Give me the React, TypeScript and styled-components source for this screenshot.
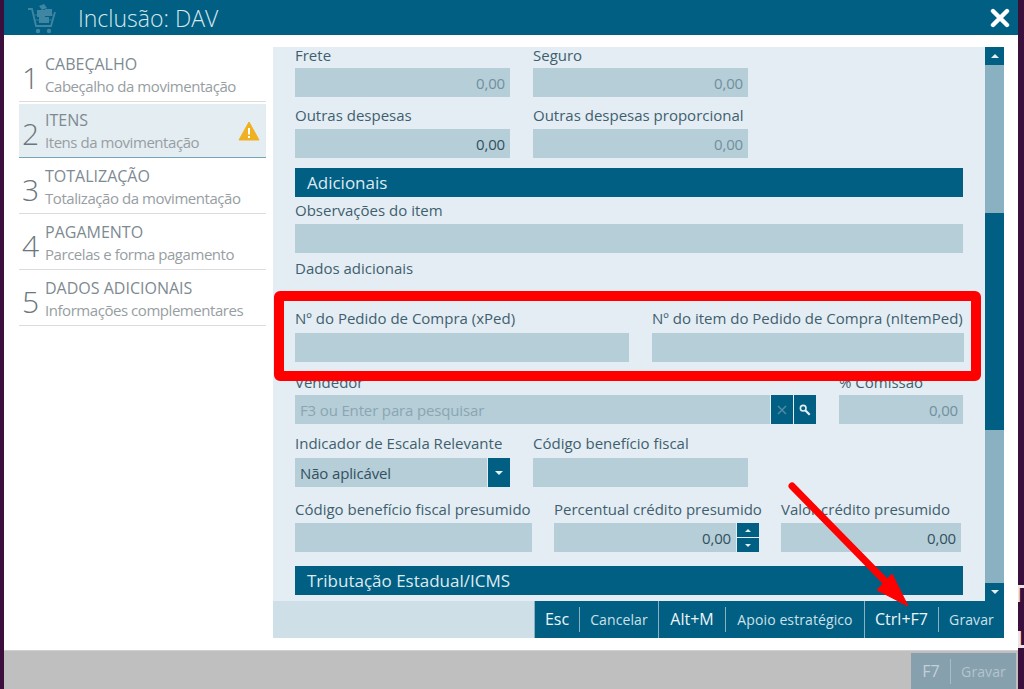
import React from 'react';
import styled, { createGlobalStyle } from 'styled-components';

const GlobalStyle = createGlobalStyle`
  html, body {
    margin: 0;
    height: 100%;
    overflow: hidden;
    background: #3a0f3c;
  }
  * { box-sizing: border-box; }
  body {
    font-family: "Open Sans", "Noto Sans", "Liberation Sans", sans-serif;
  }
`;

const Desktop = styled.div`
  position: relative;
  width: 1024px;
  height: 689px;
  padding: 0 6px 0 4px;
  overflow: hidden;
`;

// bits of the desktop's own text peeking out beside the window
const BackdropGlyph = styled.span<{ $top: number; $left: number }>`
  position: absolute;
  left: ${(p) => p.$left}px;
  top: ${(p) => p.$top}px;
  font-size: 24px;
  font-weight: 700;
  line-height: 24px;
  color: #e8e4e8;
`;

const Modal = styled.div`
  position: relative;
  height: 100%;
  display: flex;
  flex-direction: column;
  background: #fff;
`;

const TitleBar = styled.header`
  height: 35px;
  flex: none;
  display: flex;
  align-items: center;
  padding: 0 8px 0 23px;
  background: #005f83;
  color: #d7e6ec;
`;

const Title = styled.h1`
  margin: 0 0 0 21px;
  font-size: 23px;
  font-weight: 300;
  flex: 1;
`;

const Main = styled.main`
  flex: 1;
  min-height: 0;
  display: flex;
  padding: 12px 14px 12px 15px;
  gap: 7px;
`;

const Steps = styled.nav`
  width: 247px;
  flex: none;
  margin-top: -1px;
  display: flex;
  flex-direction: column;
`;

const Step = styled.div<{ $active?: boolean }>`
  height: 56px;
  padding: 3px 0 0 3px;
  display: flex;
  align-items: center;
  background: ${(p) => (p.$active ? '#e4edf2' : 'transparent')};
  border-bottom: 1px solid ${(p) => (p.$active ? '#75a5b9' : '#dcdcdc')};
  box-shadow: ${(p) => (p.$active ? 'inset 0 2px 0 #fff' : 'none')};
`;

const StepNumber = styled.span`
  width: 23px;
  font-size: 30px;
  font-weight: 300;
  color: #6c777d;
  line-height: 1;
  margin-top: 5px;
`;

const StepText = styled.div`
  flex: 1;
  min-width: 0;
  white-space: nowrap;
`;

const StepTitle = styled.div`
  font-size: 16px;
  line-height: 21px;
  color: #7e8a91;
`;

const StepSub = styled.div`
  font-size: 15px;
  line-height: 22px;
  color: #979ea2;
  letter-spacing: -0.45px;
`;

const WarnIcon = styled.svg`
  width: 22px;
  height: 20px;
  margin: 0 6px 0 0;
  flex: none;
`;

const Panel = styled.section`
  flex: 1;
  min-width: 0;
  display: flex;
  flex-direction: column;
  background: #e4edf3;
`;

const ScrollWrap = styled.div`
  flex: 1;
  min-height: 0;
  display: flex;
  overflow: hidden;
`;

const Form = styled.div`
  flex: 1;
  min-width: 0;
  padding: 0 22px;
  overflow: hidden;
`;

const Row = styled.div<{ $mb?: number; $gap?: number }>`
  display: flex;
  gap: ${(p) => p.$gap ?? 23}px;
  margin-bottom: ${(p) => p.$mb ?? 10}px;
`;

const Field = styled.div<{ $w?: number }>`
  width: ${(p) => (p.$w ? `${p.$w}px` : '100%')};
  flex: none;
`;

const Label = styled.div<{ $h?: number }>`
  height: ${(p) => p.$h ?? 22}px;
  font-size: 15px;
  line-height: 17px;
  color: #3f5f6f;
  white-space: nowrap;
`;

const NoteLabel = styled(Label)`
  height: 21px;
  margin: 7px 0 29px;
`;

const Input = styled.div<{ $dark?: boolean; $hint?: boolean; $left?: boolean }>`
  height: 29px;
  display: flex;
  align-items: center;
  justify-content: ${(p) => (p.$left ? 'flex-start' : 'flex-end')};
  padding: 0 5px;
  background: #b5ced8;
  font-size: 15px;
  letter-spacing: -0.15px;
  color: ${(p) => (p.$dark ? '#33505f' : p.$hint ? '#8ba5b1' : '#71909e')};
  white-space: nowrap;
`;

const SquareButton = styled.div<{ $muted?: boolean }>`
  width: 22px;
  height: 29px;
  flex: none;
  display: flex;
  align-items: center;
  justify-content: center;
  background: #005f83;
  color: ${(p) => (p.$muted ? '#4f8ba5' : '#e6eff3')};
`;

const InputGroup = styled.div`
  display: flex;
  gap: 1px;
`;

const Grow = styled.div`
  flex: 1;
  min-width: 0;
`;

const SpinColumn = styled.div`
  width: 22px;
  height: 29px;
  flex: none;
  display: flex;
  flex-direction: column;
  gap: 1px;
`;

const SpinButton = styled.div`
  flex: 1;
  background: #005f83;
  display: flex;
  align-items: center;
  justify-content: center;
`;

const Caret = styled.span<{ $up?: boolean; $size?: number }>`
  width: 0;
  height: 0;
  border-left: ${(p) => p.$size ?? 4}px solid transparent;
  border-right: ${(p) => p.$size ?? 4}px solid transparent;
  ${(p) =>
    p.$up
      ? `border-bottom: ${p.$size ?? 4}px solid #e6eff3;`
      : `border-top: ${p.$size ?? 4}px solid #e6eff3;`}
`;

const SectionHead = styled.h2`
  height: 29px;
  margin: 0 0 5px;
  padding: 0 12px;
  background: #005f83;
  color: #dfeaef;
  font-size: 17px;
  font-weight: 400;
  line-height: 30px;
`;

const ScrollBar = styled.div`
  width: 19px;
  flex: none;
  display: flex;
  flex-direction: column;
  background: #8ab1c2;
`;

const ScrollArrow = styled.div`
  height: 18px;
  flex: none;
  background: #005f83;
  display: flex;
  align-items: center;
  justify-content: center;
`;

const ScrollTrack = styled.div`
  flex: 1;
  padding-top: 148px;
`;

const ScrollThumb = styled.div`
  height: 217px;
  background: #005f83;
`;

const ActionBar = styled.footer`
  height: 37px;
  flex: none;
  display: flex;
  justify-content: flex-end;
  background: #cfdfe7;
`;

const Action = styled.div<{ $ghost?: boolean }>`
  display: flex;
  align-items: center;
  height: 100%;
  background: ${(p) => (p.$ghost ? '#86a0ae' : '#005f83')};
  border-left: 1px solid ${(p) => (p.$ghost ? 'transparent' : '#8ab1c2')};
  color: ${(p) => (p.$ghost ? '#b4c4cd' : '#cfe0e8')};
  font-size: 14px;
  letter-spacing: 0.1px;
  white-space: nowrap;
`;

const ActionKey = styled.span<{ $w: number }>`
  width: ${(p) => p.$w}px;
  height: 25px;
  line-height: 25px;
  text-align: center;
  border-right: 1px solid #8ab1c2;
  color: #eef5f8;
  font-size: 16px;
  letter-spacing: 0;
`;

const ActionKeyGhost = styled(ActionKey)`
  color: #c3d0d7;
  border-right-color: #a9bcc7;
`;

const ActionLabel = styled.span<{ $w: number }>`
  width: ${(p) => p.$w}px;
  text-align: center;
`;

const StatusBar = styled.div`
  height: 39px;
  flex: none;
  display: flex;
  justify-content: flex-end;
  padding: 2px 2px 0 0;
  background: #bfbfbf;
  border-top: 1px solid #d0d0d0;
`;

const Highlight = styled.div`
  position: absolute;
  left: 274px;
  top: 291px;
  width: 707px;
  height: 90px;
  border: 10px solid #ff0000;
  border-radius: 6px;
  pointer-events: none;
`;

const ArrowOverlay = styled.svg`
  position: absolute;
  left: 0;
  top: 0;
  width: 1024px;
  height: 689px;
  pointer-events: none;
`;

const steps = [
  { n: 1, title: 'CABEÇALHO', sub: 'Cabeçalho da movimentação' },
  { n: 2, title: 'ITENS', sub: 'Itens da movimentação', active: true },
  { n: 3, title: 'TOTALIZAÇÃO', sub: 'Totalização da movimentação' },
  { n: 4, title: 'PAGAMENTO', sub: 'Parcelas e forma pagamento' },
  { n: 5, title: 'DADOS ADICIONAIS', sub: 'Informações complementares' },
];

const CartIcon = () => (
  <svg width="30" height="32" viewBox="0 0 30 32" fill="none" stroke="#3f86a3" strokeWidth="1.8">
    <path d="M1 7h4l4 17h15l4-14" />
    <path d="M7 13h19M8 18h17" strokeWidth="0.8" />
    <path d="M12 4l5-2 3 4-5 2z" fill="#3f86a3" stroke="none" />
    <rect x="10" y="8" width="8" height="7" fill="#3f86a3" stroke="none" />
    <rect x="18" y="7" width="7" height="7" fill="#3f86a3" stroke="none" />
    <rect x="12" y="15" width="10" height="6" fill="#3f86a3" stroke="none" />
    <circle cx="11" cy="29" r="2.2" fill="#3f86a3" stroke="none" />
    <circle cx="22" cy="29" r="2.2" fill="#3f86a3" stroke="none" />
  </svg>
);

const CloseIcon = () => (
  <svg width="20" height="20" viewBox="0 0 20 20" stroke="#fff" strokeWidth="4.4" strokeLinecap="round">
    <path d="M3 3l14 14M17 3L3 17" />
  </svg>
);

const SearchIcon = () => (
  <svg width="12" height="12" viewBox="0 0 12 12" fill="none" stroke="currentColor">
    <circle cx="4.2" cy="4.2" r="2.8" strokeWidth="1.6" />
    <path d="M6.5 6.5l4.2 4.2" strokeWidth="2.2" />
  </svg>
);

const ClearIcon = () => (
  <svg width="10" height="10" viewBox="0 0 10 10" stroke="currentColor" strokeWidth="1.5">
    <path d="M1 1l8 8M9 1L1 9" />
  </svg>
);

export default function App() {
  return (
    <>
      <GlobalStyle />
      <Desktop>
        <BackdropGlyph $top={581} $left={1011}>T</BackdropGlyph>
        <BackdropGlyph $top={627} $left={1015}>L</BackdropGlyph>
        <Modal>
          <TitleBar>
            <CartIcon />
            <Title>Inclusão: DAV</Title>
            <CloseIcon />
          </TitleBar>

          <Main>
            <Steps>
              {steps.map((s) => (
                <Step key={s.n} $active={s.active}>
                  <StepNumber>{s.n}</StepNumber>
                  <StepText>
                    <StepTitle>{s.title}</StepTitle>
                    <StepSub>{s.sub}</StepSub>
                  </StepText>
                  {s.active && (
                    <WarnIcon viewBox="0 0 22 20">
                      <path d="M11 1L21 19H1z" fill="#efb022" stroke="#efb022" strokeLinejoin="round" />
                      <path d="M11 7v6.5M11 15v2" stroke="#fff" strokeWidth="2" />
                    </WarnIcon>
                  )}
                </Step>
              ))}
            </Steps>

            <Panel>
              <ScrollWrap>
                <Form>
                  <Row>
                    <Field $w={215}>
                      <Label $h={21}>Frete</Label>
                      <Input>0,00</Input>
                    </Field>
                    <Field $w={215}>
                      <Label $h={21}>Seguro</Label>
                      <Input>0,00</Input>
                    </Field>
                  </Row>
                  <Row>
                    <Field $w={215}>
                      <Label>Outras despesas</Label>
                      <Input $dark>0,00</Input>
                    </Field>
                    <Field $w={215}>
                      <Label>Outras despesas proporcional</Label>
                      <Input>0,00</Input>
                    </Field>
                  </Row>
                  <SectionHead>Adicionais</SectionHead>
                  <Field>
                    <Label>Observações do item</Label>
                    <Input />
                  </Field>
                  <NoteLabel>Dados adicionais</NoteLabel>
                  <Row $mb={12}>
                    <Field $w={334}>
                      <Label $h={23}>Nº do Pedido de Compra (xPed)</Label>
                      <Input />
                    </Field>
                    <Field $w={312}>
                      <Label $h={23}>Nº do item do Pedido de Compra (nItemPed)</Label>
                      <Input />
                    </Field>
                  </Row>
                  <Row $mb={11}>
                    <Field $w={521}>
                      <Label $h={21}>Vendedor</Label>
                      <InputGroup>
                        <Grow>
                          <Input $hint $left>F3 ou Enter para pesquisar</Input>
                        </Grow>
                        <SquareButton $muted><ClearIcon /></SquareButton>
                        <SquareButton><SearchIcon /></SquareButton>
                      </InputGroup>
                    </Field>
                    <Field $w={124}>
                      <Label $h={21}>% Comissão</Label>
                      <Input>0,00</Input>
                    </Field>
                  </Row>
                  <Row $mb={14}>
                    <Field $w={215}>
                      <Label $h={23}>Indicador de Escala Relevante</Label>
                      <InputGroup>
                        <Grow>
                          <Input $dark $left>Não aplicável</Input>
                        </Grow>
                        <SquareButton><Caret /></SquareButton>
                      </InputGroup>
                    </Field>
                    <Field $w={215}>
                      <Label $h={23}>Código benefício fiscal</Label>
                      <Input />
                    </Field>
                  </Row>
                  <Row $mb={14} $gap={22}>
                    <Field $w={237}>
                      <Label>Código benefício fiscal presumido</Label>
                      <Input />
                    </Field>
                    <Field $w={205}>
                      <Label>Percentual crédito presumido</Label>
                      <InputGroup>
                        <Grow>
                          <Input $dark>0,00</Input>
                        </Grow>
                        <SpinColumn>
                          <SpinButton><Caret $up $size={3} /></SpinButton>
                          <SpinButton><Caret $size={3} /></SpinButton>
                        </SpinColumn>
                      </InputGroup>
                    </Field>
                    <Field $w={180}>
                      <Label>Valor crédito presumido</Label>
                      <Input $dark>0,00</Input>
                    </Field>
                  </Row>
                  <SectionHead>Tributação Estadual/ICMS</SectionHead>
                </Form>
                <ScrollBar>
                  <ScrollArrow><Caret $up /></ScrollArrow>
                  <ScrollTrack><ScrollThumb /></ScrollTrack>
                  <ScrollArrow><Caret /></ScrollArrow>
                </ScrollBar>
              </ScrollWrap>
              <ActionBar>
                <Action>
                  <ActionKey $w={45}>Esc</ActionKey>
                  <ActionLabel $w={78}>Cancelar</ActionLabel>
                </Action>
                <Action>
                  <ActionKey $w={67}>Alt+M</ActionKey>
                  <ActionLabel $w={138}>Apoio estratégico</ActionLabel>
                </Action>
                <Action>
                  <ActionKey $w={74}>Ctrl+F7</ActionKey>
                  <ActionLabel $w={65}>Gravar</ActionLabel>
                </Action>
              </ActionBar>
            </Panel>
          </Main>

          <StatusBar>
            <Action $ghost>
              <ActionKeyGhost $w={39}>F7</ActionKeyGhost>
              <ActionLabel $w={65}>Gravar</ActionLabel>
            </Action>
          </StatusBar>
        </Modal>

        <Highlight />
        <ArrowOverlay viewBox="0 0 1024 689">
          <path d="M792 486L886 582" stroke="#ff0000" strokeWidth="7" strokeLinecap="round" />
          <path d="M908 606L877 590L892 574z" fill="#ff0000" stroke="#ff0000" strokeWidth="1" />
        </ArrowOverlay>
      </Desktop>
    </>
  );
}
